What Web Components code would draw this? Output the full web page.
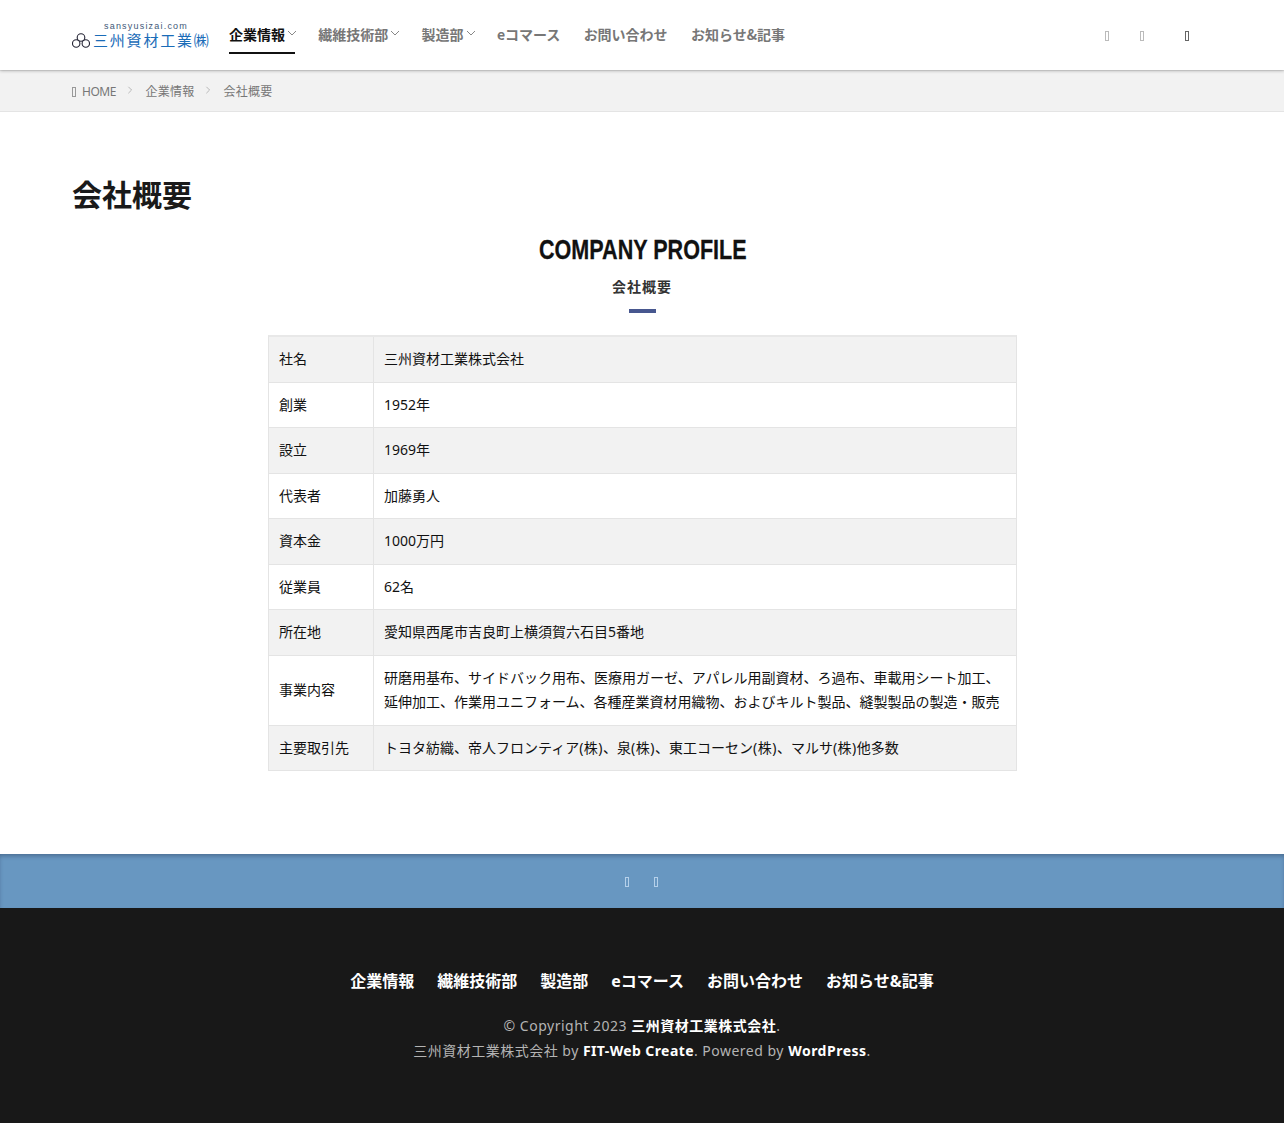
<!DOCTYPE html>
<html lang="ja">
<head>
<meta charset="utf-8">
<title>会社概要</title>
<style>
html, body { margin: 0; padding: 0; background: #fff; }
body { font-family: "Noto Sans", "Noto Sans CJK JP", sans-serif; color: #111; }
.kk { letter-spacing: .5px; }
</style>
</head>
<body>
<site-header>
  <nav-item current chevron>企業情報</nav-item>
  <nav-item chevron>繊維技術部</nav-item>
  <nav-item chevron>製造部</nav-item>
  <nav-item>eコマース</nav-item>
  <nav-item>お問い合わせ</nav-item>
  <nav-item>お知らせ&amp;記事</nav-item>
</site-header>
<crumb-bar></crumb-bar>
<page-main>
  <section-heading title="COMPANY PROFILE" sub="会社概要"></section-heading>
  <profile-table>
    <profile-row shade><span slot="label">社名</span>三州資材工業株式会社</profile-row>
    <profile-row><span slot="label">創業</span>1952年</profile-row>
    <profile-row shade><span slot="label">設立</span>1969年</profile-row>
    <profile-row><span slot="label">代表者</span>加藤勇人</profile-row>
    <profile-row shade><span slot="label">資本金</span>1000万円</profile-row>
    <profile-row><span slot="label">従業員</span>62名</profile-row>
    <profile-row shade><span slot="label">所在地</span>愛知県西尾市吉良町上横須賀六石目5番地</profile-row>
    <profile-row><span slot="label">事業内容</span>研磨用基布、サイドバック用布、医療用ガーゼ、アパレル用副資材、ろ過布、車載用シート加工、延伸加工、作業用ユニフォーム、各種産業資材用織物、およびキルト製品、縫製製品の製造・販売</profile-row>
    <profile-row shade><span slot="label">主要取引先</span>トヨタ紡織、帝人フロンティア<span class="kk">(株)</span>、泉<span class="kk">(株)</span>、東工コーセン<span class="kk">(株)</span>、マルサ<span class="kk">(株)</span>他多数</profile-row>
  </profile-table>
</page-main>
<social-band></social-band>
<site-footer></site-footer>

<script>
const chevron = (size, color) => `<svg width="${size}" height="${size}" viewBox="0 0 10 10" fill="none" stroke="${color}" stroke-width="1"><path d="M1 3l4 4 4-4"/></svg>`;

// Empty box: the original page's icon font did not load, so its icons show as this
customElements.define('icon-box', class extends HTMLElement {
  constructor() {
    super();
    this.attachShadow({ mode: 'open' }).innerHTML = `
    <style>
    :host { display: inline-block; flex: none; width: 2px; height: 8px; margin-top: 2px; border: 1px solid currentColor; }
    </style>`;
  }
});

customElements.define('site-header', class extends HTMLElement {
  constructor() {
    super();
    this.attachShadow({ mode: 'open' }).innerHTML = `
    <style>
    :host { display: block; position: relative; z-index: 1; height: 70px; background: #fff; box-shadow: 0 1px 3px rgba(0,0,0,.25); }
    #bar { display: flex; align-items: stretch; height: 70px; padding: 0 72px; box-sizing: border-box; }
    #logo { flex: none; width: 137px; margin: 21px 20px 0 0; color: #1a6cb8; }
    #dom { font: 9px/10px "Liberation Sans", sans-serif; letter-spacing: 1.2px; color: #3e5878; margin-left: 32px; white-space: nowrap; }
    #mark { display: flex; align-items: center; gap: 3px; height: 16px; margin-top: 1px; }
    #mark svg { flex: none; }
    #mark span { font: 15px/16px "Noto Sans CJK JP", sans-serif; letter-spacing: 1.8px; white-space: nowrap; }
    nav { display: flex; gap: 23.3px; flex: 1; }
    #tools { display: flex; width: 107px; align-items: center; color: #bbb; }
    #tools icon-box:nth-child(2) { margin-left: 31px; }
    #tools icon-box:nth-child(3) { margin-left: 41px; color: #666; }
    </style>
    <div id="bar">
      <div id="logo">
        <div id="dom">sansyusizai.com</div>
        <div id="mark">
          <svg width="18" height="15" viewBox="0 0 18 15" fill="none" stroke="#223" stroke-width="1.1"><circle cx="9" cy="4.5" r="3.8"/><circle cx="4.2" cy="10.5" r="3.7"/><circle cx="13.8" cy="10.5" r="3.7"/></svg>
          <span>三州資材工業㈱</span>
        </div>
      </div>
      <nav><slot></slot></nav>
      <div id="tools"><icon-box></icon-box><icon-box></icon-box><icon-box></icon-box></div>
    </div>`;
  }
});

customElements.define('nav-item', class extends HTMLElement {
  constructor() {
    super();
    this.attachShadow({ mode: 'open' }).innerHTML = `
    <style>
    :host { display: flex; align-items: center; height: 70px; box-sizing: border-box; padding-bottom: 2px; position: relative; font-family: "Noto Sans CJK JP", sans-serif; font-size: 14px; line-height: 20px; font-weight: 700; color: #777; white-space: nowrap; }
    :host([current]) { color: #111; }
    :host([current])::after { content: ""; position: absolute; left: 0; right: 0; top: 52px; height: 2px; background: #111; }
    svg { flex: none; margin: -2px -2px 0 2px; }
    </style>
    <slot></slot>${this.hasAttribute('chevron') ? chevron(10, '#888') : ''}`;
  }
});

customElements.define('crumb-bar', class extends HTMLElement {
  constructor() {
    super();
    this.attachShadow({ mode: 'open' }).innerHTML = `
    <style>
    :host { display: block; background: #f2f2f2; border-top: 1px solid #e4e4e4; border-bottom: 1px solid #e4e4e4; box-sizing: border-box; height: 42px; }
    div { display: flex; align-items: center; height: 40px; padding: 0 72px; font-size: 12px; color: #777; }
    icon-box { margin-right: 6px; color: #999; }
    em { font-style: normal; letter-spacing: -.5px; margin-right: .6px; }
    span { letter-spacing: .25px; }
    svg { margin: -2px 11px 0 10px; transform: rotate(-90deg); }
    </style>
    <div><icon-box></icon-box><em>HOME</em>${chevron(8, '#aaa')}<span>企業情報</span>${chevron(8, '#aaa')}<span>会社概要</span></div>`;
  }
});

customElements.define('page-main', class extends HTMLElement {
  constructor() {
    super();
    this.attachShadow({ mode: 'open' }).innerHTML = `
    <style>
    :host { display: block; padding: 0 72px 83px; }
    h1 { margin: 0; padding-top: 60px; font-size: 30px; line-height: 45px; font-weight: 700; color: #1a1a1a; }
    </style>
    <h1>会社概要</h1>
    <slot></slot>`;
  }
});

customElements.define('section-heading', class extends HTMLElement {
  constructor() {
    super();
    this.attachShadow({ mode: 'open' }).innerHTML = `
    <style>
    :host { display: flex; flex-direction: column; align-items: center; padding-top: 13px; }
    h2 { margin: 0 0 0 1px; font: 700 28px/40px "Liberation Sans", sans-serif; color: #111; white-space: nowrap; transform: scaleX(.77); -webkit-text-stroke: .3px #111; }
    p { margin: 5px 0 0; font-size: 14px; line-height: 24px; font-weight: 700; letter-spacing: 1px; color: #333; }
    b { display: block; width: 27px; height: 4px; margin-top: 10px; background: #47578f; }
    </style>
    <h2>${this.getAttribute('title')}</h2>
    <p>${this.getAttribute('sub')}</p>
    <b></b>`;
  }
});

customElements.define('profile-table', class extends HTMLElement {
  constructor() {
    super();
    this.attachShadow({ mode: 'open' }).innerHTML = `
    <style>
    :host { display: block; width: 749px; margin: 22px 0 0 196px; border-top: 2px solid #e8e8e8; border-right: 1px solid #e4e4e4; border-left: 1px solid #e4e4e4; box-sizing: border-box; font-size: 14px; line-height: 24.5px; color: #111; }
    </style>
    <slot></slot>`;
  }
});

customElements.define('profile-row', class extends HTMLElement {
  constructor() {
    super();
    this.attachShadow({ mode: 'open' }).innerHTML = `
    <style>
    :host { display: grid; grid-template-columns: 105px 1fr; border-bottom: 1px solid #e4e4e4; }
    :host([shade]) { background: #f2f2f2; }
    #l, #v { padding: 10px; display: flex; align-items: center; }
    #l { border-right: 1px solid #e4e4e4; }
    #v { display: block; padding-right: 14px; }
    </style>
    <div id="l"><slot name="label"></slot></div>
    <div id="v"><slot></slot></div>`;
  }
});

customElements.define('social-band', class extends HTMLElement {
  constructor() {
    super();
    this.attachShadow({ mode: 'open' }).innerHTML = `
    <style>
    :host { display: flex; justify-content: center; align-items: center; gap: 25px; height: 54px; padding-right: 1px; box-sizing: border-box; background: #6897c1; box-shadow: inset 0 3px 4px -1px rgba(40,60,90,.45); color: #b5d0ea; }
    </style>
    <icon-box></icon-box><icon-box></icon-box>`;
  }
});

customElements.define('site-footer', class extends HTMLElement {
  constructor() {
    super();
    this.attachShadow({ mode: 'open' }).innerHTML = `
    <style>
    :host { display: block; height: 215px; background: #181818; color: #b4b4b4; text-align: center; box-sizing: border-box; padding-top: 60px; }
    nav { display: flex; justify-content: center; gap: 23px; font-size: 16px; line-height: 26px; font-weight: 700; color: #fff; }
    p { margin: 19px 0 0; font-size: 14px; line-height: 25px; letter-spacing: .5px; }
    b { color: #fff; }
    .fit { letter-spacing: .4px; }
    </style>
    <nav><span>企業情報</span><span>繊維技術部</span><span>製造部</span><span>eコマース</span><span>お問い合わせ</span><span>お知らせ&amp;記事</span></nav>
    <p>© Copyright 2023 <b>三州資材工業株式会社</b>.<br>三州資材工業株式会社 by <b class="fit">FIT-Web Create</b>. Powered by <b>WordPress</b>.</p>`;
  }
});
</script>
</body>
</html>
